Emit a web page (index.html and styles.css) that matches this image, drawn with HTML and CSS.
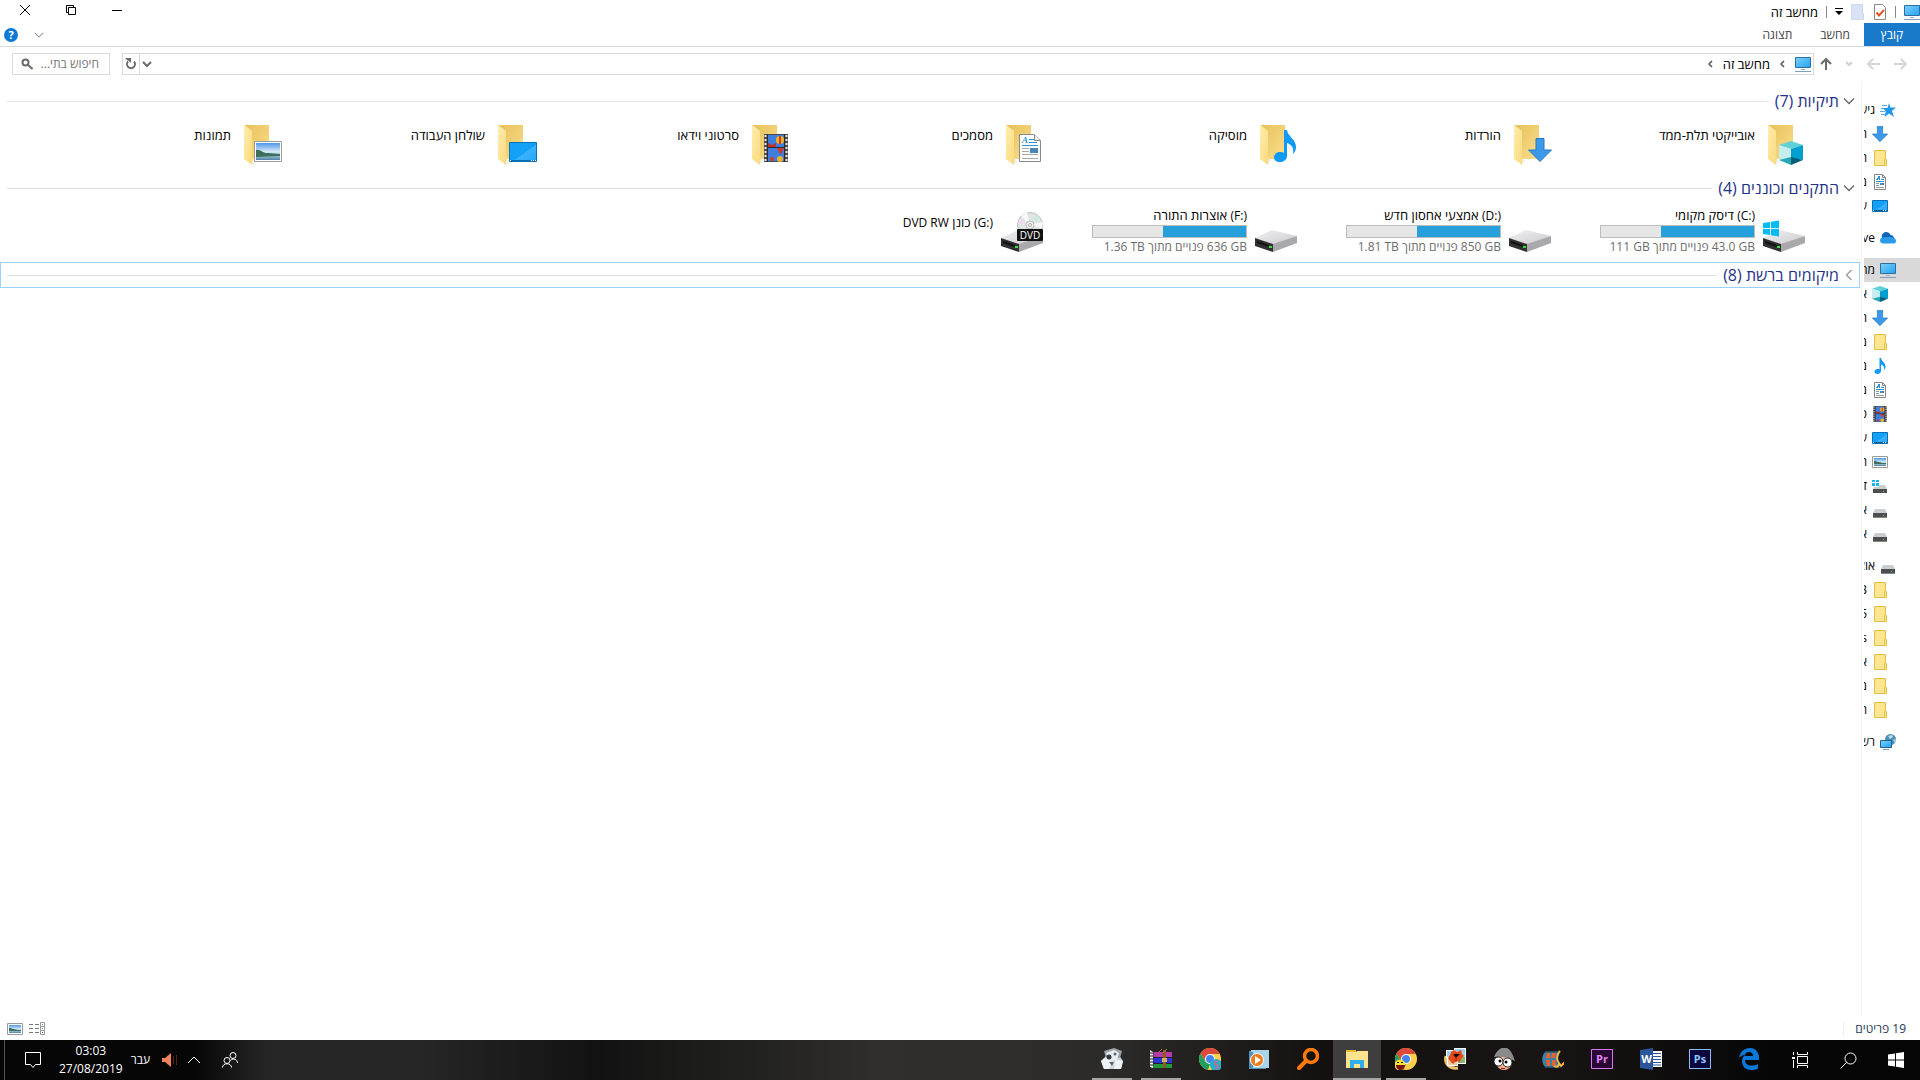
FILE: index.html
```html
<!DOCTYPE html>
<html lang="he" dir="rtl">
<head>
    <meta charset="UTF-8">
    <meta name="viewport" content="width=device-width, initial-scale=1.0">
    <title>מחשב זה</title>
    <link rel="stylesheet" href="styles.css">
</head>
<body>
    <!-- shared icons -->
    <svg class="defs" aria-hidden="true">
        <defs>
            <linearGradient id="gScreen" x1="0" y1="0" x2="1" y2="1"><stop offset="0" stop-color="#7fd0fb"/><stop offset="1" stop-color="#1fa3f5"/></linearGradient>
            <linearGradient id="gBack" x1="0" y1="0" x2="1" y2="1"><stop offset="0" stop-color="#e6c05a"/><stop offset="1" stop-color="#fbdf8c"/></linearGradient>
            <linearGradient id="gFlap" x1="0" y1="0" x2="1" y2="1"><stop offset="0" stop-color="#ffedb0"/><stop offset="1" stop-color="#f9d878"/></linearGradient>
            <linearGradient id="gDesk" x1="0" y1="0" x2="1" y2="1"><stop offset="0" stop-color="#12a0f8"/><stop offset=".55" stop-color="#12a0f8"/><stop offset=".56" stop-color="#3cb2fd"/><stop offset="1" stop-color="#22a7fb"/></linearGradient>
            <linearGradient id="gSky" x1="0" y1="0" x2="0" y2="1"><stop offset="0" stop-color="#4f97ea"/><stop offset=".5" stop-color="#d3e9f8"/><stop offset=".8" stop-color="#8fb9c8"/><stop offset="1" stop-color="#4a7fa8"/></linearGradient>
            <linearGradient id="gMetal" x1="0" y1="0" x2="1" y2="1"><stop offset="0" stop-color="#f2f2f3"/><stop offset="1" stop-color="#c9c9cc"/></linearGradient>
        </defs>
        <symbol id="monitor" viewBox="0 0 16 16">
            <path fill="url(#gScreen)" stroke="#2f6f9e" d="M.5 1.5h15v10H.5z"/>
            <path fill="#8fb4cc" d="M6 13h4v1H6z"/><path fill="#7f9fb8" d="M0 15h16v1H0z"/>
        </symbol>
        <symbol id="cube" viewBox="0 0 24 24">
            <path fill="#5fd0d6" d="M12 0l12 4-12 4L0 4z"/><path fill="#c5eef0" d="M0 4l12 4v9L0 19z"/>
            <path fill="#009fd1" d="M24 4L12 8v9l12 2z"/><path fill="#27a9b5" d="M0 19l12-3v8z"/><path fill="#045f76" d="M24 19l-12-3v8z"/>
        </symbol>
        <symbol id="down" viewBox="0 0 24 24"><path fill="#3c98e8" stroke="#2478c4" d="M8 .5h8v11.500h7.500L12 23.500.5 12H8z"/></symbol>
        <symbol id="folder" viewBox="0 0 16 16"><path fill="#ffe592" stroke="#e8c23f" d="M2.500.5h11v9h1v6h-12zM12.500 15v-5.500h1"/></symbol>
        <symbol id="note" viewBox="0 0 22 32"><path fill="#0f9af5" d="M10 0h3c1 7 9 9 9 17 0 3-1 5-3 7 1-6-1-9-6-11v13c0 4-4 6-7 6-4 0-6-2-6-4.500C0 24 3 22 6 22c2 0 3 0 4 1z"/></symbol>
        <symbol id="doc" viewBox="0 0 22 28">
            <path fill="#fff" stroke="#8a8a8a" d="M.5.5h15l6 6v21H.5z"/><path fill="#eee" stroke="#8a8a8a" d="M15.500.5v6h6"/>
            <text class="doc-letter" x="3" y="9">A</text>
            <path fill="#2b93d6" d="M10 5h5v1h-5zM10 8h8v1h-8zM3 11h16v1H3z"/>
            <path fill="#aaa" d="M3 14h7v1H3zM3 17h7v1H3zM3 20h16v1H3zM3 24h16v1H3z"/><path fill="#4a86b8" d="M11 14h8v5h-8z"/>
        </symbol>
        <symbol id="film" viewBox="0 0 24 28">
            <path fill="#4a4a4a" d="M0 0h24v28H0z"/><path fill="#3f7edb" d="M4 1h16v12H4zM4 14h16v13H4z"/>
            <path stroke="#e8e8e8" stroke-width="2" stroke-dasharray="2 2" d="M1.500 1v26M22.500 1v26"/>
            <path fill="#b8322a" d="M4 9l4 2 4-2v4H4z"/><circle cx="16" cy="6" r="4" fill="#f0b429"/><path fill="#d13a28" d="M15 2h2v8h-2z"/>
            <path fill="#d13a28" d="M13 14h7l-3 6h-1z"/><circle cx="16" cy="25" r="3" fill="#f0b429"/><circle cx="8" cy="25" r="2" fill="#d13a28"/>
            <path stroke="#2b2b2b" d="M3.500 0v28M20.500 0v28M3 13.500h18"/>
        </symbol>
        <symbol id="desktop" viewBox="0 0 28 20">
            <path fill="url(#gDesk)" stroke="#0d6fb4" d="M.5.5h27v19H.5z"/><path fill="#0d6fb4" d="M1 18h26v1H1z"/>
            <path fill="#fff" d="M1 18h1v1H1zM22 18h1v1h-1zM24 18h1v1h-1zM26 18h1v1h-1z"/>
        </symbol>
        <symbol id="picture" viewBox="0 0 28 21">
            <path fill="#fff" stroke="#9b9b9b" d="M.5.5h27v20H.5z"/><path fill="url(#gSky)" d="M2 2h24v17H2z"/>
            <path fill="#3c6e5c" d="M2 9c5-1 7 4 12 3 4 0 7 1 12 1v2L2 16z"/>
        </symbol>
        <!-- small versions -->
        <symbol id="doc16" viewBox="0 0 16 16">
            <path fill="#fff" stroke="#848484" d="M2.500.5h8l3 3v12h-11zM10.500.5v3h3"/>
            <path fill="#2b93d6" d="M4 5h1V4h1V2h2v4H7V5H6v1H4zM9 5h3v1H9zM4 7h8v1H4z"/><path fill="#4a86b8" d="M8 9h4v2H8z"/>
            <path fill="#999" d="M4 9h3v1H4zM4 11h3v1H4zM4 13h8v1H4z"/>
        </symbol>
        <symbol id="desktop16" viewBox="0 0 16 16">
            <path fill="url(#gDesk)" stroke="#0d6fb4" d="M.5 2.500h15v11H.5z"/><path fill="#0a5a96" d="M1 12h14v1H1z"/>
            <path fill="#fff" d="M1 12h1v1H1zM11 12h1v1h-1zM13 12h1v1h-1z"/>
        </symbol>
        <symbol id="picture16" viewBox="0 0 16 12">
            <path fill="#fff" stroke="#9b9b9b" d="M.5.5h15v11H.5z"/><path fill="url(#gSky)" d="M2 2h12v8H2z"/><path fill="#3c6e5c" d="M2 5c3 0 5 2 12 2v1H2z"/>
        </symbol>
        <symbol id="drive" viewBox="0 -3 16 16">
            <path fill="#c9cdd0" d="M3 4h10l2 4H1z"/><path fill="#4b4f52" d="M1 8h14v4H1z"/><path fill="#888" d="M1 12h14v1H1z"/><path fill="#4dea4d" d="M11 10h1v1h-1z"/>
        </symbol>
        <symbol id="windrive" viewBox="0 -1 16 16">
            <path fill="#c9cdd0" d="M3 6h10l2 4H1z"/><path fill="#4b4f52" d="M1 10h14v4H1z"/><path fill="#4dea4d" d="M11 12h1v1h-1z"/>
            <path fill="#fff" d="M0 0h7v8H0z"/><path fill="#17b4ee" d="M0 1h3v2H0zM4 1h3v2H4zM0 4h3v3H0zM4 4h3v3H4z"/>
        </symbol>
        <symbol id="star" viewBox="0 0 16 16">
            <path fill="#2197ea" d="M9 1l1.500 4.500H16L12 9l2 6-5-3.500L4.500 15l1.300-5.500L3 6h4.500z"/><path stroke="#4fabf0" d="M2 3.500h5M1 6.500h3M0 9.500h5M1 12.500h4"/>
        </symbol>
        <symbol id="cloud" viewBox="0 0 16 16">
            <path fill="#0f63b8" d="M2 8a4.500 4.500 0 0 1 8.500-3C13 5 14 7 14 8z"/><path fill="#2b9be9" d="M0 10.500C0 8 2 7 4 7.200L10 7c4 0 6 2 6 4s-1 2.500-2.500 2.500H3C1 13.500 0 12 0 10.500z"/>
        </symbol>
        <symbol id="network" viewBox="0 0 16 16">
            <circle cx="10.500" cy="5.500" r="5.500" fill="#4f90b5"/><path fill="#b8dcea" d="M8 2l4-1 1 2-3 2zM13 6l3-1-1 4z"/>
            <path fill="url(#gScreen)" stroke="#27628c" d="M.5 6.500h11v7H.5z"/><path fill="#7f9fb8" d="M3 15h6v1H3z"/>
        </symbol>
        <symbol id="bigfolder" viewBox="0 0 48 48">
            <path fill="url(#gBack)" d="M8 5h25v34H15V11z"/><path fill="url(#gFlap)" d="M8 5l8 6v26l1 1-1 7-8-6z"/><path fill="#eee" d="M17 38l2 3-3 4z"/>
        </symbol>
        <symbol id="bigdrive" viewBox="0 0 48 48">
            <path fill="url(#gMetal)" d="M3 31l17-8 25 6-24 9z"/><path fill="#303033" d="M3 31l18 6v8L3 39z"/>
            <path fill="#a9a9ac" d="M21 37l24-8v7l-24 9z"/><path fill="#101010" d="M5 34l12 4v2L5 36z"/><path fill="#35e03c" d="M17 39h3v2h-3z"/>
        </symbol>
        <symbol id="winlogo" viewBox="0 0 16 16"><path d="M0 2.500L7 1.500v6H0zM8 1.300L16 0v7.500H8zM0 8.500h7v6l-7-1zM8 8.500h8V16l-8-1.300z"/></symbol>
        <symbol id="chrome" viewBox="0 0 22 22">
            <circle cx="11" cy="11" r="11" fill="#fcd04b"/><path fill="#dc4a3d" d="M1.500 5.500A11 11 0 0 1 20.800 6H11L6.500 13.500z"/>
            <path fill="#1fa05c" d="M1.500 5.500l5 8.300 4.500 2.200-2 5.800A11 11 0 0 1 1.500 5.500z"/><circle cx="11" cy="11" r="5" fill="#fff"/><circle cx="11" cy="11" r="4" fill="#4486f4"/>
        </symbol>
        <symbol id="chev" viewBox="0 0 12 12"><path fill="none" stroke="currentColor" stroke-width="1.300" d="M1 3.500l5 5 5-5"/></symbol>
        <symbol id="crumb" viewBox="0 0 5 8"><path fill="none" stroke="#555" stroke-width="1.500" d="M4 1L1 4l3 3"/></symbol>
    </svg>

    <header class="titlebar">
        <div class="quick">
            <svg width="16" height="16"><use href="#monitor"/></svg>
            <span class="sep"></span>
            <button class="plain" aria-label="מאפיינים"><svg width="14" height="16" viewBox="0 0 14 16"><path fill="#fff" stroke="#8a8a8a" d="M1.500.5h8l3 3v12h-11z"/><path fill="none" stroke="#e8541b" stroke-width="2" d="M3.500 8.500l2.500 3L11 6"/></svg></button>
            <button class="plain" aria-label="תיקיה חדשה"><svg width="14" height="16" viewBox="0 0 14 16"><path fill="#d9e3f5" stroke="#cbd8ee" d="M.5.5h11v9h1v6H.5z"/></svg></button>
            <button class="plain" aria-label="התאמה אישית"><svg width="8" height="8" viewBox="0 0 8 8"><path d="M0 0h8v1H0zM0 3h8L4 7z"/></svg></button>
            <span class="sep"></span>
        </div>
        <h1>מחשב זה</h1>
        <div class="controls">
            <button aria-label="מזער"><svg width="10" height="10" viewBox="0 0 10 10"><path stroke="#000" d="M0 5.500h10"/></svg></button>
            <button aria-label="שחזר"><svg width="10" height="10" viewBox="0 0 10 10"><path fill="none" stroke="#000" d="M2.500 2.500h7v7h-7zM2 7.500H.5v-7h7V2"/></svg></button>
            <button aria-label="סגור"><svg width="10" height="10" viewBox="0 0 10 10"><path stroke="#000" d="M0 0l10 10M10 0L0 10"/></svg></button>
        </div>
    </header>

    <nav class="tabs">
        <a class="file" href="#">קובץ</a>
        <a href="#">מחשב</a>
        <a href="#">תצוגה</a>
        <div class="help">
            <button class="plain" aria-label="הרחב"><svg class="faint" width="10" height="10"><use href="#chev"/></svg></button>
            <button class="round" aria-label="עזרה">?</button>
        </div>
    </nav>

    <div class="address">
        <div class="arrows">
            <button class="plain" aria-label="הקודם"><svg width="14" height="12" viewBox="0 0 14 12"><path fill="none" stroke="#d6d6d6" stroke-width="2" d="M0 6h12M7 1l5 5-5 5"/></svg></button>
            <button class="plain" aria-label="הבא"><svg width="14" height="12" viewBox="0 0 14 12"><path fill="none" stroke="#d6d6d6" stroke-width="2" d="M14 6H2M7 1L2 6l5 5"/></svg></button>
            <button class="plain" aria-label="אחרונים"><svg width="6" height="6" viewBox="0 0 6 6"><path fill="none" stroke="#d0d0d0" stroke-width="2" d="M0 1l3 3 3-3"/></svg></button>
            <button class="plain" aria-label="למעלה"><svg width="12" height="14" viewBox="0 0 12 14"><path fill="none" stroke="#6b6b6b" stroke-width="2" d="M6 13V2M1 7l5-5 5 5"/></svg></button>
        </div>
        <div class="path">
            <svg width="16" height="16"><use href="#monitor"/></svg>
            <svg width="5" height="8"><use href="#crumb"/></svg>
            <a href="#">מחשב זה</a>
            <svg width="5" height="8"><use href="#crumb"/></svg>
            <button class="plain history" aria-label="מיקומים קודמים"><svg width="10" height="8" viewBox="0 0 10 8"><path fill="none" stroke="#6b6b6b" stroke-width="2" d="M1 2l4 4 4-4"/></svg></button>
            <button class="plain refresh" aria-label="רענן"><svg width="12" height="12" viewBox="0 0 12 12"><path fill="none" stroke="#6b6b6b" stroke-width="2" d="M9 3.500a4 4 0 1 1-6 0"/><path fill="#6b6b6b" d="M0 0h6v5L4.500 3.500 2 2z"/></svg></button>
        </div>
        <label class="search">
            <input type="text" placeholder="חיפוש בתי..." aria-label="חיפוש">
            <svg width="12" height="12" viewBox="0 0 12 12"><circle cx="4.500" cy="4.500" r="3" fill="none" stroke="#6b6b6b" stroke-width="2"/><path stroke="#6b6b6b" stroke-width="2" d="M7 7l4.500 4"/></svg>
        </label>
    </div>

    <div class="window">
        <nav class="tree">
            <ul>
                <li class="top"><svg><use href="#star"/></svg><a href="#">גישה מהירה</a></li>
                <li><svg><use href="#down"/></svg><a href="#">הורדות</a></li>
                <li><svg><use href="#folder"/></svg><a href="#">תורה</a></li>
                <li><svg><use href="#doc16"/></svg><a href="#">מסמכים</a></li>
                <li><svg><use href="#desktop16"/></svg><a href="#">שולחן העבודה</a></li>
            </ul>
            <ul>
                <li class="top"><svg><use href="#cloud"/></svg><a href="#">OneDrive</a></li>
            </ul>
            <ul>
                <li class="top selected"><svg><use href="#monitor"/></svg><a href="#">מחשב זה</a></li>
                <li><svg><use href="#cube"/></svg><a href="#">אובייקטי תלת-ממד</a></li>
                <li><svg><use href="#down"/></svg><a href="#">הורדות</a></li>
                <li><svg><use href="#folder"/></svg><a href="#">מוסיקה</a></li>
                <li><svg><use href="#note"/></svg><a href="#">מוסיקה</a></li>
                <li><svg><use href="#doc16"/></svg><a href="#">מסמכים</a></li>
                <li><svg><use href="#film"/></svg><a href="#">סרטוני וידאו</a></li>
                <li><svg><use href="#desktop16"/></svg><a href="#">שולחן העבודה</a></li>
                <li><svg><use href="#picture16"/></svg><a href="#">תמונות</a></li>
                <li><svg><use href="#windrive"/></svg><a href="#">דיסק מקומי</a></li>
                <li><svg><use href="#drive"/></svg><a href="#">אמצעי אחסון חדש</a></li>
                <li><svg><use href="#drive"/></svg><a href="#">אוצרות התורה</a></li>
            </ul>
            <ul>
                <li class="top"><svg><use href="#drive"/></svg><a href="#">אוצרות התורה</a></li>
                <li><svg><use href="#folder"/></svg><a href="#">B</a></li>
                <li><svg><use href="#folder"/></svg><a href="#">5</a></li>
                <li><svg><use href="#folder"/></svg><a href="#">s</a></li>
                <li><svg><use href="#folder"/></svg><a href="#">אוצרות</a></li>
                <li><svg><use href="#folder"/></svg><a href="#">מסמכים</a></li>
                <li><svg><use href="#folder"/></svg><a href="#">תמונות</a></li>
            </ul>
            <ul>
                <li class="top"><svg><use href="#network"/></svg><a href="#">רשת</a></li>
            </ul>
        </nav>

        <main>
            <section>
                <h2><button class="group"><svg width="12" height="12"><use href="#chev"/></svg>תיקיות (7)</button></h2>
                <div class="items">
                    <a class="item" href="#"><svg viewBox="0 0 48 48"><use href="#bigfolder"/><use href="#cube" x="19" y="21" width="24" height="24"/></svg><span>אובייקטי תלת-ממד</span></a>
                    <a class="item" href="#"><svg viewBox="0 0 48 48"><use href="#bigfolder"/><use href="#down" x="22" y="18" width="24" height="24"/></svg><span>הורדות</span></a>
                    <a class="item" href="#"><svg viewBox="0 0 48 48"><use href="#bigfolder"/><use href="#note" x="22" y="10" width="22" height="32"/></svg><span>מוסיקה</span></a>
                    <a class="item" href="#"><svg viewBox="0 0 48 48"><use href="#bigfolder"/><use href="#doc" x="21" y="14" width="22" height="28"/></svg><span>מסמכים</span></a>
                    <a class="item" href="#"><svg viewBox="0 0 48 48"><use href="#bigfolder"/><use href="#film" x="20" y="14" width="24" height="28"/></svg><span>סרטוני וידאו</span></a>
                    <a class="item" href="#"><svg viewBox="0 0 48 48"><use href="#bigfolder"/><use href="#desktop" x="19" y="22" width="28" height="20"/></svg><span>שולחן העבודה</span></a>
                    <a class="item" href="#"><svg viewBox="0 0 48 48"><use href="#bigfolder"/><use href="#picture" x="18" y="21" width="28" height="21"/></svg><span>תמונות</span></a>
                </div>
            </section>
            <section>
                <h2><button class="group"><svg width="12" height="12"><use href="#chev"/></svg>התקנים וכוננים (4)</button></h2>
                <div class="items">
                    <a class="item drive" href="#"><svg viewBox="0 0 48 48"><use href="#bigdrive"/><use href="#winlogo" fill="#00bcf2" x="3" y="13" width="16" height="17"/></svg>
                        <span><bdi dir="ltr">(C:)</bdi> דיסק מקומי<i class="bar"><b style="width: 61%"></b></i><small><bdi dir="ltr">43.0 GB</bdi> פנויים מתוך <bdi dir="ltr">111 GB</bdi></small></span></a>
                    <a class="item drive" href="#"><svg viewBox="0 0 48 48"><use href="#bigdrive"/></svg>
                        <span><bdi dir="ltr">(D:)</bdi> אמצעי אחסון חדש<i class="bar"><b style="width: 54%"></b></i><small><bdi dir="ltr">850 GB</bdi> פנויים מתוך <bdi dir="ltr">1.81 TB</bdi></small></span></a>
                    <a class="item drive" href="#"><svg viewBox="0 0 48 48"><use href="#bigdrive"/></svg>
                        <span><bdi dir="ltr">(F:)</bdi> אוצרות התורה<i class="bar"><b style="width: 54%"></b></i><small><bdi dir="ltr">636 GB</bdi> פנויים מתוך <bdi dir="ltr">1.36 TB</bdi></small></span></a>
                    <a class="item" href="#"><svg viewBox="0 0 48 48"><use href="#bigdrive"/><circle cx="32" cy="18" r="12.500" fill="#dfe5e3" stroke="#b8bdbd"/><path fill="#f8fbf9" d="M32 18l-9-9 6-4zM32 18l12 3 1-6z"/><path fill="#eedcec" d="M32 18l-12-1 1-5z"/><path fill="#c8ece0" d="M32 18l7-10 3 3z"/><circle cx="32" cy="18" r="4" fill="#eee" stroke="#bbb"/><circle cx="32" cy="18" r="1.500" fill="#fff" stroke="#aaa"/><rect x="19" y="22" width="26" height="12" rx="1" fill="#101010"/><text class="dvd" x="32" y="31.500">DVD</text></svg>
                        <span><bdi dir="ltr">(G:)</bdi> כונן <bdi dir="ltr">DVD RW</bdi></span></a>
                </div>
            </section>
            <section>
                <h2><button class="group closed"><svg width="12" height="12"><use href="#chev"/></svg>מיקומים ברשת (8)</button></h2>
            </section>
        </main>
    </div>

    <footer class="status">
        <span>19 פריטים</span>
        <div class="views">
            <button class="plain" aria-label="פרטים"><svg width="16" height="14" viewBox="0 0 16 14"><path stroke="#777" stroke-dasharray="4 2" d="M0 2.500h11M0 6.500h11M0 10.500h11"/><path fill="#fff" stroke="#999" d="M11.500.5h4v12h-4zM11.500 4.500h4M11.500 8.500h4"/><path fill="#4a86d8" d="M13 2h1v1h-1zM13 6h1v1h-1z"/><path fill="#c22" d="M13 10h1v1h-1z"/></svg></button>
            <button class="plain" aria-label="סמלים"><svg width="16" height="12"><use href="#picture16"/></svg></button>
        </div>
    </footer>

    <div class="taskbar">
        <div class="system">
            <button aria-label="התחל"><svg width="16" height="16" fill="#fff"><use href="#winlogo"/></svg></button>
            <button aria-label="חיפוש"><svg width="17" height="17" viewBox="0 0 17 17" fill="none" stroke="#fff"><circle cx="10.500" cy="6.500" r="5.500"/><path d="M6.500 10.500L.5 16.500"/></svg></button>
            <button aria-label="תצוגת משימות"><svg width="16" height="16" viewBox="0 0 16 16" fill="none" stroke="#fff"><path d="M5.500 4.500h10v7h-10zM5.500 0v2.500h10V0M5.500 16v-2.500h10V16M1.500 0v3M1.500 8v8"/><path fill="#fff" stroke="none" d="M0 5h3v2H0z"/></svg></button>
        </div>
        <div class="apps">
            <button aria-label="Edge"><svg viewBox="0 0 22 22"><path fill="#0a78d7" d="M1 10C2 4 6 0 12 0c6 0 9 5 9 9v3H7c0 4 3 5.500 6 5.500 3 0 5-.500 7-1.500v4.500c-2 1-4 1.500-7 1.500-6 0-9-4-9-9 0-3 2-5.500 4-6.500C4 7 2 8.500 1 10zm6-2h8c0-2-1-4-4-4S7 6 7 8z"/></svg></button>
            <button aria-label="Photoshop"><svg viewBox="0 0 22 22"><path fill="#0b0640" stroke="#8cc0f5" d="M.5 1.500h21v19H.5z"/><text class="adobe" fill="#8cc8ff" x="11" y="15">Ps</text></svg></button>
            <button aria-label="Word"><svg viewBox="0 0 22 22"><path fill="#fff" d="M11 3h11v16H11z"/><path stroke="#2b579a" d="M13 5.500h8M13 8.500h8M13 11.500h8M13 14.500h8M13 17h8"/><path fill="#2b579a" d="M0 2l13-2v22L0 20z"/><text class="word" x="6.500" y="15">W</text></svg></button>
            <button aria-label="Premiere"><svg viewBox="0 0 22 22"><path fill="#2a0634" stroke="#d278f0" d="M.5 1.500h21v19H.5z"/><text class="adobe" fill="#e085f8" x="11" y="15">Pr</text></svg></button>
            <button aria-label="Movie Maker"><svg viewBox="0 0 22 22"><path fill="#3f7fa5" d="M4 3h14c-4 5-4 11 0 17H4C-1 16-1 7 4 3z"/><path fill="#1f4a66" d="M4 3h14l-1 1.500H3zM3 18.500h14l1 1.500H4z"/><path fill="#e8622a" d="M5 5h3v5H4zM10 5h4l-1 5H9zM4 12h4v6H5zM10 12h3l1 6h-4z"/><path fill="none" stroke="#f5b545" stroke-width="2" d="M18 3c-3 3-4 9-1 12M12 18c3 2 5 0 5-3l2 3 4-4"/></svg></button>
            <button aria-label="משחק"><svg viewBox="0 0 22 22"><circle cx="11" cy="14" r="8" fill="#eeb08c"/><path fill="#8b8b8b" d="M1 9C4 1 10-2 14 0c4 2 6 7 8 13-7-4-13-5-21-4z"/><circle cx="5.500" cy="13.500" r="4.500" fill="#fff" stroke="#222"/><circle cx="14.500" cy="14.500" r="4.500" fill="#fff" stroke="#222"/><circle cx="7" cy="13" r="1.500"/><circle cx="13" cy="14" r="1.500"/><path stroke="#a22" d="M8 20.500h4"/></svg></button>
            <button aria-label="Photo Gallery"><svg viewBox="0 0 22 22"><path fill="none" stroke="#f0c468" stroke-width="3" d="M2 8c-2 8 4 13 12 12"/><path fill="#fff" d="M2 2h12v8H2zM10 0h12v16H10z"/><path fill="#9fd0ee" d="M3 3h10v6H3zM11 1h10v8H11z"/><path fill="#8fb56a" d="M11 9h10v6H11z"/><path fill="#fff" d="M3 9h11v9H3z"/><path fill="#f3c9a0" d="M4 10h9v7H4z"/><path fill="#e54b1b" d="M10 2l3 2 4-2 1 4 2 2-3 3-1 3-4-1-3 3-3-3-2-3 2-3 1-3z"/><path stroke="#8c2a0c" d="M9 6l3 4 4-4M12 10v4"/></svg></button>
            <button class="open" aria-label="Chrome"><svg viewBox="0 0 22 22"><use href="#chrome" width="22" height="22"/><circle cx="5" cy="17" r="5.500" fill="#ffdf3a"/><path fill="#7d1410" d="M1 17h9c0 3-2 5-4.500 5S1 20 1 17z"/><path stroke="#222" d="M2 14.500h2M6 14.500h2"/></svg></button>
            <button class="open active" aria-label="סייר הקבצים"><svg viewBox="0 0 22 22"><path fill="#e8b830" d="M0 2h10v4H0z"/><path fill="#ffe38f" d="M0 4h10l1-1h11v17H0z"/><path fill="#2fb0ec" d="M4 20v-8h14v8h-4v-4H8v4z"/></svg></button>
            <button aria-label="חיפוש קבצים"><svg viewBox="0 0 22 22" fill="none" stroke="#ff7a0c"><circle cx="14" cy="8" r="6.500" stroke-width="3.500"/><path stroke-width="4" stroke-linecap="round" d="M9 13l-7 7"/></svg></button>
            <button aria-label="Media Player"><svg viewBox="0 0 22 22"><path fill="#4f93b8" d="M1 3h17v18H1z"/><path fill="#a8d5ea" d="M3 2h18v18H5V4H3z"/><circle cx="9" cy="12" r="6.500" fill="#ee7b1c" stroke="#fff"/><path fill="#fff" d="M7 8l6 4-6 4z"/></svg></button>
            <button aria-label="Chrome"><svg viewBox="0 0 22 22"><use href="#chrome" width="22" height="22"/><circle cx="17" cy="17" r="6" fill="#17b3cc"/><path fill="none" stroke="#e2608a" stroke-width="1.500" d="M19 13.500h-3v3c4-1 4 4 0 4"/></svg></button>
            <button class="open" aria-label="WinRAR"><svg viewBox="0 0 22 22"><path fill="#b539a8" d="M2 4h20v5H2z"/><path fill="#2a35d8" d="M2 10h20v5H2z"/><path fill="#1e9a3a" d="M2 16h20v4H2z"/><path fill="#eee" d="M0 2l3 2v16l-3-1z"/><path stroke="#222" d="M0 5h4M0 8h4M0 11h4M0 14h4M0 17h4M3 9.500h19M3 15.500h19"/><path fill="#8c5a24" d="M13 2h3v18h-3z"/><path fill="#d8b060" d="M12 10h5v4h-5z"/><path fill="none" stroke="#a8743a" d="M8 5l4-4M13 5l4-4"/></svg></button>
            <button class="open" aria-label="Robot"><svg viewBox="0 0 22 22"><path fill="#cfd6dc" d="M0 13l5-5 12-2 5 7-2 8H3z"/><path fill="#9aa4ac" d="M3 3l10-3 8 3-2 7H5z"/><path fill="#e8edf0" d="M5 5l8-3 5 3-2 7-7 1z"/><path fill="#eef2f5" d="M0 13l6-4 5 6-3 6H3zM14 12l8 1-2 8h-7z"/><circle cx="8" cy="9" r="2.500" fill="#2c3844"/><circle cx="14" cy="6" r="1.500" fill="#5d6c78"/><path fill="#5a6872" d="M8 14h5l-2 4z"/></svg></button>
        </div>
        <div class="tray">
            <button aria-label="אנשים"><svg width="16" height="16" viewBox="0 0 16 16" fill="none" stroke="#fff"><circle cx="11" cy="3.500" r="3"/><circle cx="5" cy="8.500" r="3"/><path d="M.5 15.500c0-5 9-5 9 0M8.500 8.500c3-3 7-1 7 2.500"/></svg></button>
            <button class="up" aria-label="הצג סמלים מוסתרים"><svg width="12" height="8" viewBox="0 0 12 8" fill="none" stroke="#fff"><path d="M0 7l6-6 6 6"/></svg></button>
            <button class="sound" aria-label="רמקולים"><svg width="16" height="14" viewBox="0 0 16 14"><path fill="#ef8260" d="M0 5h3l6-5v14L3 9H0z"/><path stroke="#5a2010" d="M11.500 3v8M14.500 2v10"/></svg></button>
            <span class="lang">עבר</span>
            <time datetime="2019-08-27T03:03">03:03<br>27/08/2019</time>
            <button class="center" aria-label="מרכז הפעולות"><svg width="16" height="16" viewBox="0 0 16 16" fill="none" stroke="#fff"><path d="M.5.5h15v12h-5l-2.500 3-2.500-3h-5z"/></svg></button>
            <span class="peek"></span>
        </div>
    </div>
</body>
</html>
```

FILE: styles.css
```css
* {
    margin: 0;
    padding: 0;
    box-sizing: border-box;
}

body {
    display: flex;
    flex-direction: column;
    min-height: 100vh;
    font: 12px/16px "Open Sans", "Liberation Sans", sans-serif;
    color: #000;
    background: #fff;
}

ul {
    list-style: none;
}

a {
    color: inherit;
    text-decoration: none;
}

button {
    font: inherit;
    color: inherit;
    border: 0;
    background: none;
    cursor: pointer;
}

svg {
    flex: none;
    display: block;
}

.defs {
    position: absolute;
    width: 0;
    height: 0;
}

.titlebar {
    display: flex;
    align-items: center;
    height: 23px;
}

.quick {
    display: flex;
    align-items: center;
    gap: 8px;
}

.quick .sep {
    width: 1px;
    height: 12px;
    background: #888;
}

.titlebar h1 {
    margin-right: 8px;
    font-size: 13px;
    font-weight: normal;
}

.controls {
    display: flex;
    align-self: flex-start;
    margin-right: auto;
    padding-left: 2px;
}

.controls button {
    display: flex;
    align-items: center;
    justify-content: center;
    width: 46px;
    height: 20px;
}

.tabs {
    display: flex;
    height: 24px;
    border-bottom: 1px solid #dadbdc;
}

.tabs a {
    padding: 4px 14px 3px;
    color: #444;
}

.tabs .file {
    width: 56px;
    padding: 4px 0 3px;
    text-align: center;
    color: #fff;
    background: #1979ca;
}

.help {
    display: flex;
    align-items: center;
    gap: 16px;
    margin-right: auto;
    padding-left: 4px;
}

.faint {
    color: #999;
}

.round {
    width: 14px;
    height: 14px;
    border-radius: 50%;
    font-size: 11px;
    font-weight: bold;
    line-height: 14px;
    color: #fff;
    background: #0f78d4;
}

.address {
    display: flex;
    align-items: center;
    height: 35px;
    padding: 0 12px 1px;
}

.arrows {
    display: flex;
    align-items: center;
    gap: 14px;
    padding-left: 6px;
}

.path {
    flex: 1;
    display: flex;
    align-items: center;
    gap: 10px;
    height: 22px;
    padding-right: 2px;
    border: 1px solid #d9d9d9;
}

.path a {
    font-size: 13px;
}

.history {
    margin-right: auto;
    margin-left: -8px;
}

.refresh {
    height: 20px;
    padding: 0 2px;
    border-right: 1px solid #d9d9d9;
}

.search {
    display: flex;
    align-items: center;
    gap: 4px;
    width: 98px;
    height: 22px;
    margin-right: 12px;
    padding: 0 10px 0 8px;
    border: 1px solid #d9d9d9;
}

.search input {
    flex: 1;
    min-width: 0;
    border: 0;
    outline: 0;
    font: inherit;
}

.search input::placeholder {
    color: #757575;
}

.window {
    flex: 1;
    display: flex;
}

.tree {
    width: 59px;
    padding: 16px 0 8px 2px;
    border-left: 1px solid #f3f3f3;
}

.tree ul {
    margin-bottom: 8px;
    overflow: hidden;
}

.tree li {
    display: flex;
    align-items: center;
    gap: 5px;
    height: 24px;
    padding-right: 32px;
    white-space: nowrap;
}

.tree li.top {
    padding-right: 24px;
}

.tree svg {
    width: 16px;
    height: 16px;
}

.tree .selected {
    background: #d9d9d9;
}

main {
    flex: 1;
    min-width: 0;
    padding: 6px 1px 0 0;
}

h2 {
    font-weight: normal;
}

.group {
    display: flex;
    align-items: center;
    gap: 4px;
    width: 100%;
    height: 26px;
    padding: 0 4px 0 6px;
    border: 1px solid transparent;
    font-size: 16px;
    line-height: 20px;
    color: #1e3287;
}

.group svg {
    color: #666;
}

.group::after {
    content: "";
    flex: 1;
    height: 1px;
    margin-right: 2px;
    background: #e2e2e2;
}

.group.closed {
    border-color: #99d1ff;
}

.group.closed svg {
    color: #999;
    transform: rotate(90deg);
}

.items {
    display: grid;
    grid-template-columns: repeat(auto-fill, 254px);
    padding: 6px 52px 7px 0;
}

.item {
    display: flex;
    gap: 5px;
    height: 48px;
    font-size: 13px;
}

.item svg {
    width: 48px;
    height: 48px;
}

.item span {
    padding-top: 7px;
}

.item bdi {
    font-size: 12px;
}

.item.drive span {
    width: 155px;
    padding-top: 0;
    white-space: nowrap;
}

.bar {
    display: block;
    width: 155px;
    height: 13px;
    margin: 1px 0;
    border: 1px solid #bcbcbc;
    background: #e6e6e6;
}

.bar b {
    display: block;
    height: 100%;
    background: #26a0da;
}

.item small {
    display: block;
    font-size: 12px;
    color: #6d6d6d;
}

.doc-letter {
    font: italic bold 9px "Liberation Serif", serif;
    fill: #2b93d6;
    direction: ltr;
}

.dvd {
    font: 10px "Open Sans", sans-serif;
    fill: #fff;
    text-anchor: middle;
    direction: ltr;
}

.status {
    display: flex;
    align-items: center;
    justify-content: space-between;
    height: 24px;
    padding: 2px 14px 0 7px;
    color: #1e395b;
}

.status span {
    padding-left: 11px;
    border-left: 1px solid #f0f0f0;
}

.views {
    display: flex;
    align-items: center;
    gap: 6px;
}

.taskbar {
    display: flex;
    height: 40px;
    color: #fff;
    background: linear-gradient(90deg, #060606 0%, #060606 10%, #262626 14%, #262626 22%, #121212 31%, #1f1f1e 38%, #302f2c 46%, #2c2b29 58%, #14100f 69%, #1a1515 80%, #050505 93%, #050505 100%);
}

.taskbar button {
    display: flex;
    align-items: center;
    justify-content: center;
}

.system {
    display: flex;
}

.system button {
    width: 48px;
}

.apps {
    display: flex;
    gap: 1px;
    margin-right: 3px;
}

.apps button {
    width: 48px;
    border-bottom: 2px solid transparent;
}

.apps svg {
    width: 22px;
    height: 22px;
}

.apps .open {
    width: 40px;
    margin: 0 4px;
    border-color: #a8a6a5;
}

.apps .active {
    width: 48px;
    margin: 0;
    background: #3f3e3e;
}

.adobe,
.word {
    font: bold 11px "Open Sans", sans-serif;
    text-anchor: middle;
    direction: ltr;
}

.word {
    fill: #fff;
}

.tray {
    display: flex;
    align-items: center;
    margin-right: auto;
}

.up {
    margin-right: 22px;
}

.sound {
    margin-right: 10px;
}

.lang {
    margin-right: 12px;
}

.tray time {
    margin-right: 8px;
    text-align: center;
    line-height: 18px;
}

.center {
    margin-right: 18px;
}

.peek {
    width: 1px;
    height: 40px;
    margin: 0 20px 0 4px;
    background: #555;
}
```
